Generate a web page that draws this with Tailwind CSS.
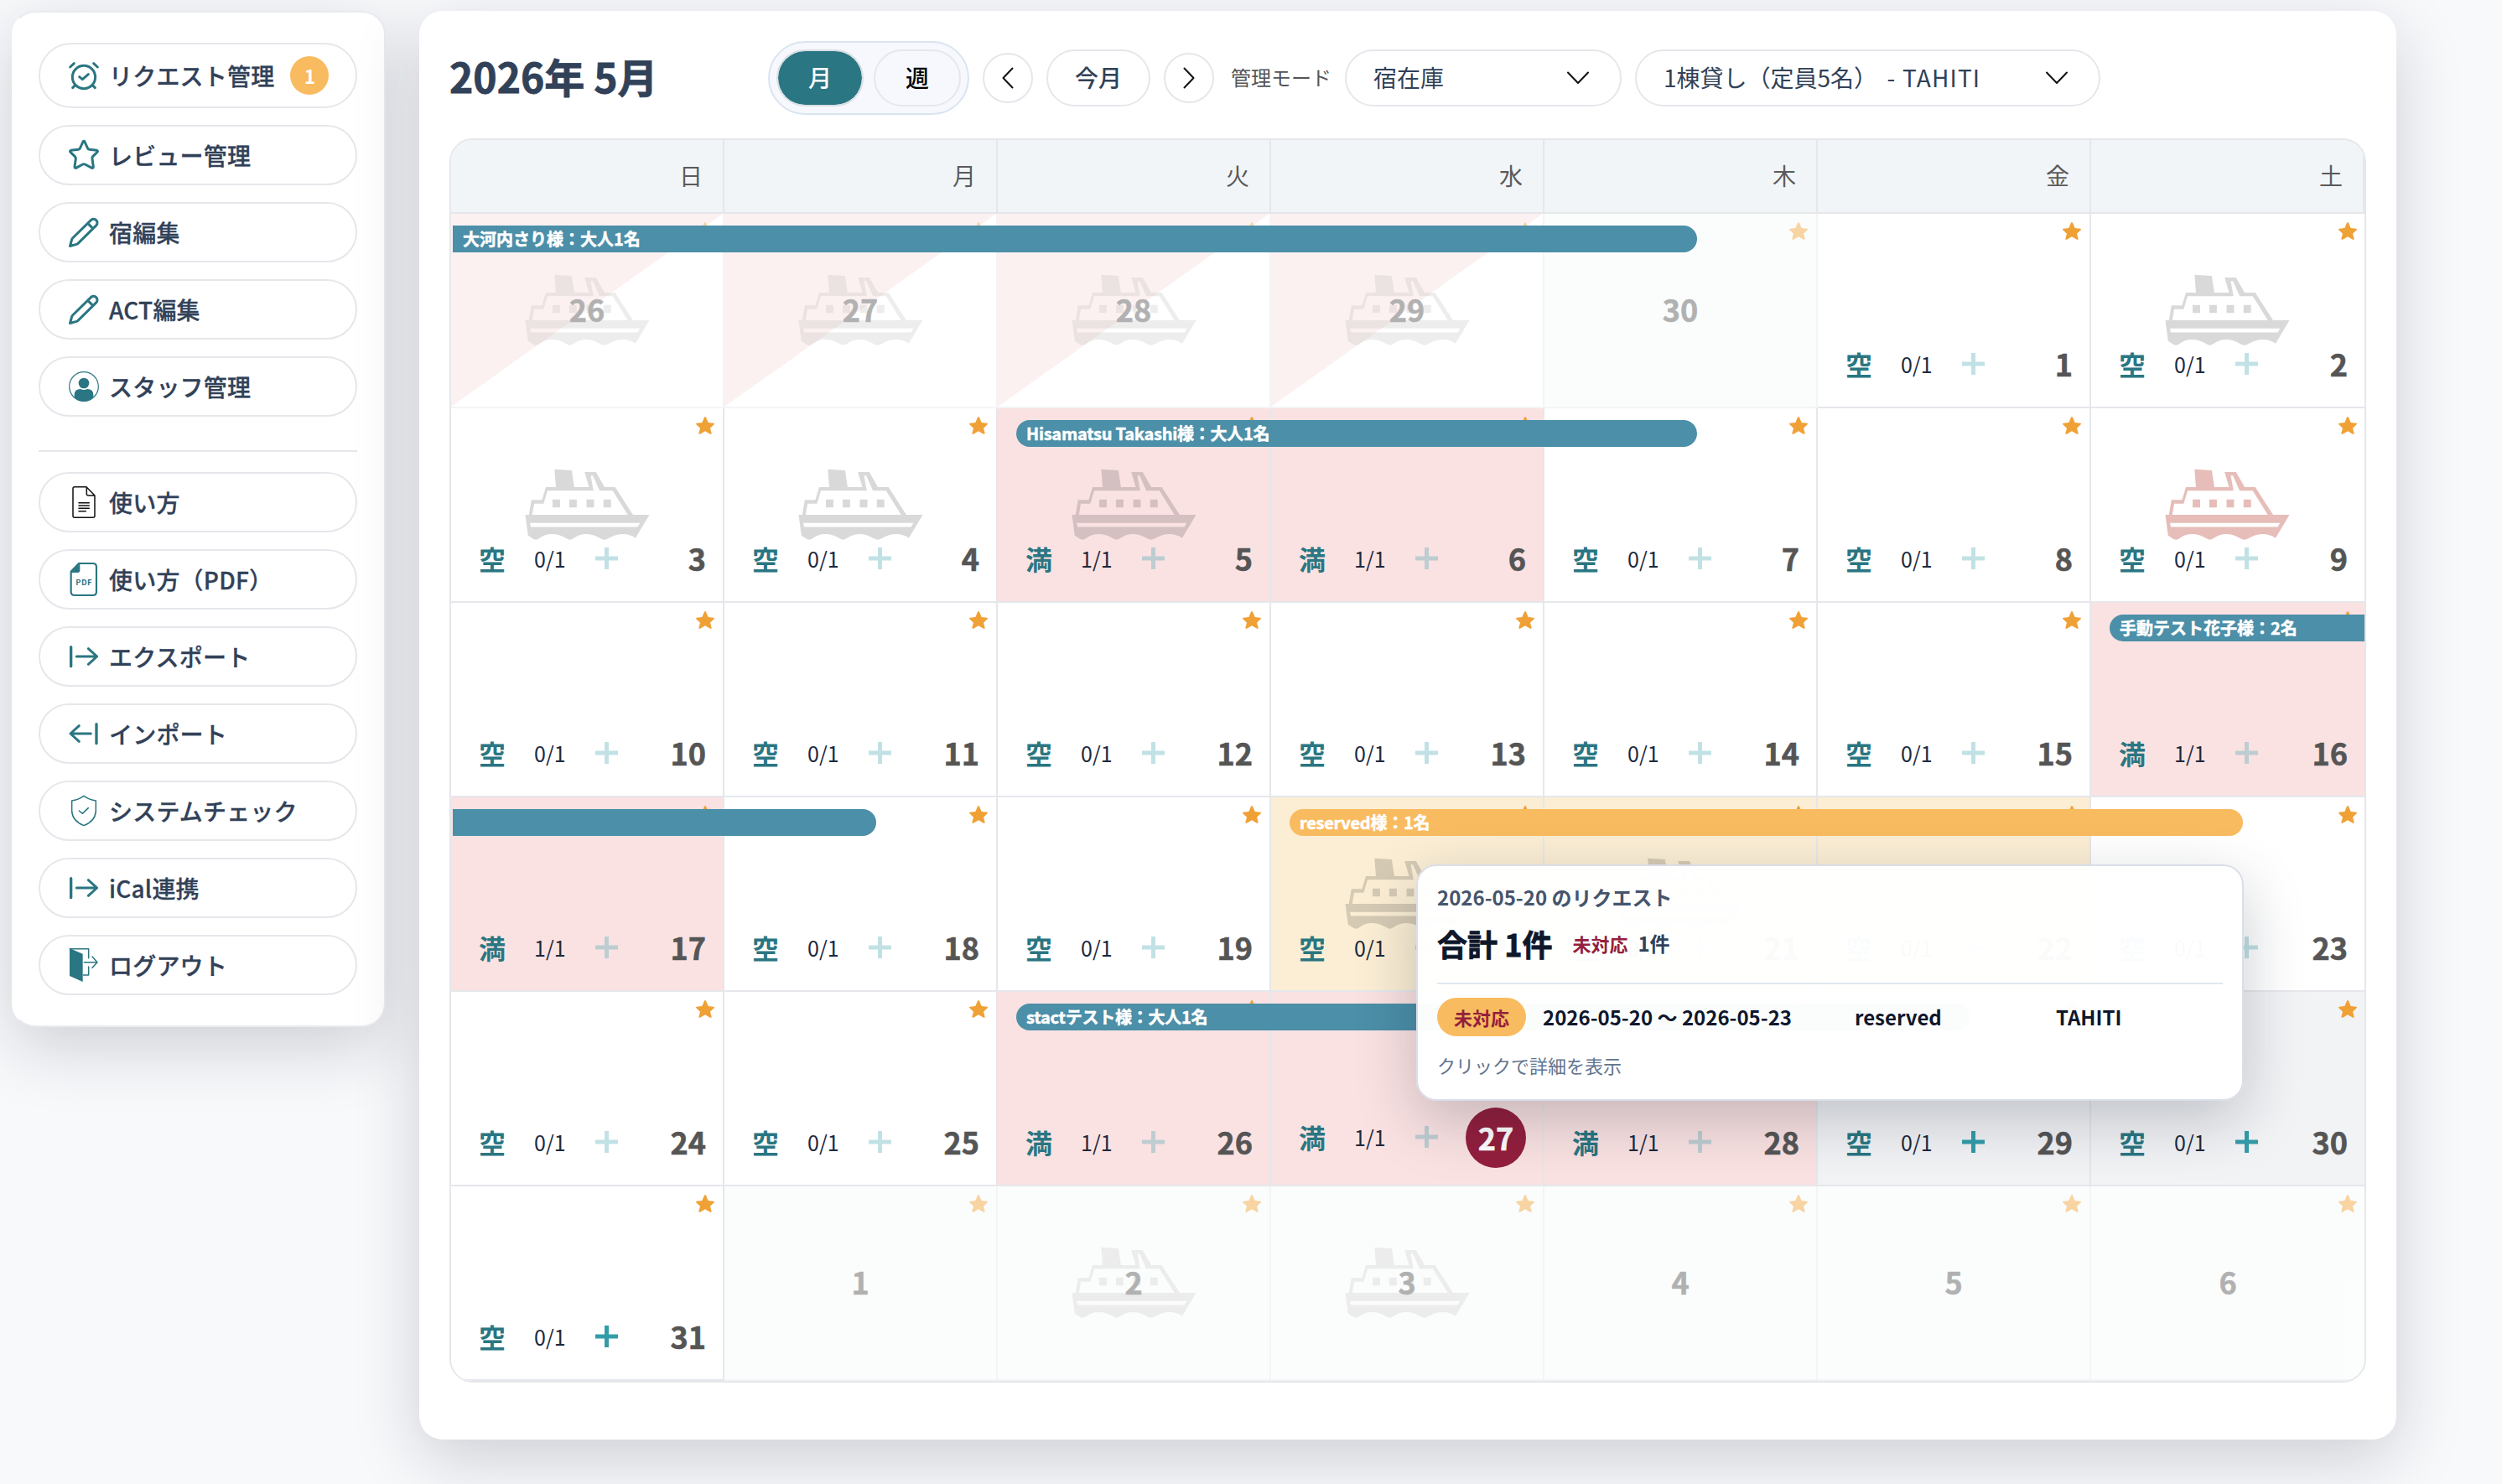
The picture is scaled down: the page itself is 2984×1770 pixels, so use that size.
<!DOCTYPE html>
<html lang="ja">
<head>
    <meta charset="UTF-8">
    <meta name="viewport" content="width=device-width, initial-scale=1.0">
    <title>予約カレンダー</title>
    <script src="https://cdn.jsdelivr.net/npm/@tailwindcss/browser@4"></script>
</head>
<body class="bg-[#f8f9fb] font-['Noto_Sans_CJK_JP',sans-serif] text-slate-700 w-[2984px] h-[1770px] overflow-hidden">
    <div class="flex items-start gap-10 pl-3.5 pt-[13px]">
        <!-- Sidebar -->
        <aside class="w-[446px] shrink-0 bg-white border-2 border-l-white border-gray-200/80 rounded-[28px] pl-[30px] pr-8 pt-9 pb-9 shadow-[0_24px_80px_rgba(15,23,42,0.18)]">
            <nav id="mainMenu" class="flex flex-col gap-5"></nav>
            <div class="h-0.5 bg-gray-200 mt-10 mb-6"></div>
            <nav id="subMenu" class="flex flex-col gap-5"></nav>
        </aside>

        <!-- Calendar -->
        <main class="relative w-[2358px] h-[1704px] bg-white rounded-[28px] px-9 pt-9 shadow-[0_24px_80px_rgba(15,23,42,0.18)]">
            <header class="flex items-center gap-4 h-[88px]">
                <h1 class="w-[364px] pb-1.5 text-5xl font-bold whitespace-nowrap [-webkit-text-stroke:0.8px]">2026年 5月</h1>
                <div class="flex items-center gap-3 h-[88px] px-2 bg-[#f6f8fd] border-2 border-[#dae4f0] rounded-full text-[28px] font-medium">
                    <button class="w-[104px] h-[68px] pb-0.5 rounded-full bg-[#2a7682] border-2 border-[#d9dfe4] bg-clip-padding text-white">月</button>
                    <button class="w-[104px] h-[68px] pb-0.5 rounded-full border-2 border-gray-200 text-black">週</button>
                </div>
                <button class="w-[60px] h-[60px] rounded-full border-2 border-gray-200 flex items-center justify-center">
                    <svg class="w-[14px] h-[26px]" viewBox="0 0 14 26" fill="none" stroke="#111" stroke-width="2" stroke-linecap="round" stroke-linejoin="round"><path d="M12.500 1.500L1.500 13l11 11.500"/></svg>
                </button>
                <button class="w-[124px] h-[68px] pb-0.5 rounded-full border-2 border-gray-200 text-[28px] font-medium">今月</button>
                <button class="w-[60px] h-[60px] rounded-full border-2 border-gray-200 flex items-center justify-center">
                    <svg class="w-[14px] h-[26px]" viewBox="0 0 14 26" fill="none" stroke="#111" stroke-width="2" stroke-linecap="round" stroke-linejoin="round"><path d="M1.500 1.500L12.500 13l-11 11.500"/></svg>
                </button>
                <span class="w-[120px] ml-1 pb-0.5 text-2xl text-[#555] whitespace-nowrap">管理モード</span>
                <div class="w-[330px] h-[68px] rounded-full border-2 border-gray-200 pl-8 pr-9 flex items-center justify-between text-[28px]">
                    <span class="pb-0.5">宿在庫</span>
                    <svg class="w-[28px] h-[16px]" viewBox="0 0 28 16" fill="none" stroke="#111" stroke-width="2" stroke-linecap="round" stroke-linejoin="round"><path d="M2 1.500l12 12.500L26 1.500"/></svg>
                </div>
                <div class="w-[555px] h-[68px] rounded-full border-2 border-gray-200 pl-8 pr-9 flex items-center justify-between text-[28px]">
                    <span class="pb-0.5 whitespace-nowrap">1棟貸し（定員5名）<span class="ml-1 tracking-[1.2px]"> - TAHITI</span></span>
                    <svg class="w-[28px] h-[16px]" viewBox="0 0 28 16" fill="none" stroke="#111" stroke-width="2" stroke-linecap="round" stroke-linejoin="round"><path d="M2 1.500l12 12.500L26 1.500"/></svg>
                </div>
            </header>

            <div class="mt-7 border-2 border-gray-200 rounded-[28px] overflow-hidden">
                <div id="weekdays" class="grid grid-cols-7 bg-[#f1f5f8]"></div>
                <div id="days" class="grid grid-cols-7"></div>
            </div>

            <!-- Request popup -->
            <div class="absolute left-[1189px] top-[1018px] z-20 w-[987px] h-[282px] bg-white/98 border-2 border-[#d9dee8] rounded-3xl px-[23px] pt-[19px] shadow-[0_24px_72px_rgba(15,23,42,0.22)]">
                <p class="h-9 leading-9 text-2xl font-bold text-slate-600">2026-05-20 のリクエスト</p>
                <div class="flex items-center h-[54px] mt-2.5 font-bold">
                    <span class="text-4xl text-slate-900 [-webkit-text-stroke:0.8px]">合計 1件</span>
                    <span class="ml-6 text-[22px] text-[#931f3d]">未対応</span>
                    <span class="ml-3 text-2xl">1件</span>
                </div>
                <div class="h-0.5 mt-5 bg-slate-200"></div>
                <div class="mt-4 h-[46px] grid grid-cols-[106px_352px_220px_1fr] gap-x-5 items-center text-2xl font-bold text-slate-900">
                    <span class="h-[46px] leading-[46px] rounded-full bg-[#f9bb5f] text-center text-[22px] text-[#931f3d]">未対応</span>
                    <span class="whitespace-nowrap">2026-05-20 〜 2026-05-23</span>
                    <span>reserved</span>
                    <span>TAHITI</span>
                </div>
                <p class="mt-4 h-9 leading-9 text-[22px] text-slate-500">クリックで詳細を表示</p>
            </div>
        </main>
    </div>

    <script>
        const icons = {
            alarm: `<g stroke-width="9"><circle cx="54" cy="60" r="41"/><path d="M5 24L19 11M89 11l14 13M14 98l9-9M94 98l-9-9M38 59l11 9 21-18"/></g>`,
            star: `<path stroke-width="9" d="M51 6q3-4 6 0l10 22q2 5 7 6l26 3q6 2 2 6L86 59q-3 3-2 8l4 29q0 5-5 4L58 87q-4-2-8 0L26 100q-5 1-5-4l4-29q0-5-3-8L6 43q-4-4 2-6l26-3q5-1 7-6z"/>`,
            pencil: `<path stroke-width="9" d="M4.500 103.500L11 80q1-3 3-5L80 10a13.500 13.500 0 0 1 19 19L33 94q-2 2-5 3zM68 22l19 19"/>`,
            user: `<circle cx="54" cy="54" r="52" stroke-width="3.500"/><g fill="currentColor" stroke="none"><circle cx="54" cy="42" r="19"/><path d="M20 92v-8q0-21 22-21 12 6 24 0 22 0 22 21v8q-14 15-34 15T20 92z"/></g>`,
            doc: `<path stroke="#111" stroke-width="4.500" d="M63-1H21q-6 0-6 6v98q0 6 6 6h66q6 0 6-6V30zM64 0v24q0 6 6 6h23M36 56h37M36 66h37M36 76h37M36 86h25"/>`,
            pdf: `<path stroke-width="6.500" d="M36-3h50q13 0 13 13v88q0 13-13 13H21Q8 111 8 98V26z"/><path fill="currentColor" stroke="none" d="M40-4v26q0 8-8 8H7z"/><text x="54" y="74" text-anchor="middle" font-size="28" font-weight="700" letter-spacing="1" fill="currentColor" stroke="none">PDF</text>`,
            out: `<path stroke-width="10" d="M8 20v69"/><path stroke-width="9" d="M28 54h72M70 26l31 28-31 28"/>`,
            in: `<path stroke-width="10" d="M99 20v69"/><path stroke-width="9" d="M79 54H7M37 26L6 54l31 28"/>`,
            shield: `<path stroke-width="4.500" d="M54 1q20 14 43 17v38q-3 36-43 51Q14 92 11 56V18Q34 15 54 1zM37 54l12 10 21-20"/>`,
            logout: `<path fill="currentColor" stroke="none" d="M3-6l47 20v100L3 93z"/><path stroke-width="4.500" d="M4-4h67v33M71 60v30H52M55 44h46M84 24l18 20-18 20"/>`
        };

        const mainMenu = [
            ["alarm", "リクエスト管理", 1],
            ["star", "レビュー管理"],
            ["pencil", "宿編集"],
            ["pencil", "ACT編集"],
            ["user", "スタッフ管理"]
        ];
        const subMenu = [
            ["doc", "使い方"],
            ["pdf", "使い方（PDF）"],
            ["out", "エクスポート"],
            ["in", "インポート"],
            ["shield", "システムチェック"],
            ["out", "iCal連携"],
            ["logout", "ログアウト"]
        ];

        const menuItem = ([icon, label, count]) => `
            <a class="flex items-center ${count ? "h-[78px]" : "h-[72px]"} pl-[34px] border-2 border-gray-200 rounded-full text-[28px] font-medium whitespace-nowrap">
                <svg class="w-9 h-9 mr-3 overflow-visible text-[#2a7682]" viewBox="0 0 108 108" fill="none" stroke="currentColor" stroke-linecap="round" stroke-linejoin="round">${icons[icon]}</svg>
                <span class="pb-px tracking-[0.2px] [-webkit-text-stroke:0.3px]">${label}</span>
                ${count ? `<span class="ml-[19px] w-[46px] h-[46px] leading-[46px] rounded-full bg-[#f9bb5f] text-center text-[22px] font-bold text-white">${count}</span>` : ""}
            </a>`;
        document.getElementById("mainMenu").innerHTML = mainMenu.map(menuItem).join("");
        document.getElementById("subMenu").innerHTML = subMenu.map(menuItem).join("");

        document.getElementById("weekdays").innerHTML = [..."日月火水木金土"].map(d => `
            <div class="h-[88px] flex items-center justify-end pr-6 pb-[3px] border-r-2 border-b-2 border-gray-200 text-[28px] text-[#5a5a5a]">${d}</div>`).join("");

        // every date is an index counted from 4/26
        const ships = [0, 1, 2, 3, 6, 7, 8, 9, 13, 24, 25, 37, 38];
        const full = [9, 10, 20, 21, 30, 31, 32];
        const requested = [24, 25, 26];
        const open = [33, 34, 35];
        const today = 31;

        // left and width are pixels from the first cell of the bar
        const bars = {
            0: { text: "大河内さり様：大人1名", left: 2, width: 1484, look: "bg-[#4c8fa8] rounded-r-2xl" },
            9: { text: "Hisamatsu Takashi様：大人1名", left: 22, width: 812, look: "bg-[#4c8fa8] rounded-2xl tracking-[-0.25px]" },
            20: { text: "手動テスト花子様：2名", left: 22, width: 304, look: "bg-[#4c8fa8] rounded-l-2xl" },
            21: { text: "", left: 2, width: 505, look: "bg-[#4c8fa8] rounded-r-2xl" },
            24: { text: "reserved様：1名", left: 22, width: 1137, look: "bg-[#f9bb5f] rounded-2xl tracking-[-0.25px]" },
            30: { text: "stactテスト様：大人1名", left: 22, width: 1137, look: "bg-[#4c8fa8] rounded-2xl tracking-[-0.25px]" }
        };

        const starIcon = last => `<svg class="absolute ${last ? "right-[9px]" : "right-2.5"} top-[10px] w-[22px] h-[21px]" viewBox="0 0 66 63" fill="#f0a136"><path d="M30 2q3-4 6 0l8 19 19 2q5 1 2 5L51 41l5 18q0 5-5 3L33 52 15 62q-5 2-5-3l5-18L1 28q-3-4 2-5l19-2z"/></svg>`;

        const shipIcon = color => `<svg class="absolute left-[88px] top-[72px] w-[149px] h-[85px] ${color}" viewBox="66 200 448 256" fill="currentColor">
            <path d="M172 202l62 4 9 60h53l-16-54h41l31 54h38l64 100h59l-50 83q-22-14-44-14-28 0-54 16-14 8-28 0-26-16-52-16-24 0-46 16-12 8-24 0-26-16-52-16-26 0-46 16-12 8-24 0l-16-11-10-74h13l9-54h38l14-46h36zM147 279l-14 47h-34l-7 40h343l-54-87h-47l-24-54h-8l10 54zM84 395l3 14h384l8-14z" fill-rule="evenodd"/>
            <path d="M165 311h27v28h-27zM225 311h27v28h-27zM287 311h27v28h-27zM348 311h27v28h-27z"/>
        </svg>`;

        const dayCell = i => {
            const faded = i < 5 || i > 35;
            const day = i < 5 ? 26 + i : i > 35 ? i - 35 : i - 4;
            let bg = "bg-white";
            if (i < 4) bg = "bg-[linear-gradient(to_bottom_right,#fae2e2_50%,#ffffff_50%)]";
            else if (faded) bg = "bg-[#f8fcfa]";
            else if (full.includes(i)) bg = "bg-[#fae2e2]";
            else if (requested.includes(i)) bg = "bg-[#fbeed4]";
            else if (i === 33 || i === 34) bg = "bg-[#f2f3f5]";

            const status = faded ? `<div class="relative h-full flex items-center justify-center pb-1 text-4xl font-bold text-[#555] [-webkit-text-stroke:0.6px]">${day}</div>` : `
                <div class="absolute inset-x-0 bottom-5 min-h-[60px] flex items-center pl-[33px] pr-5 ${i === today ? "h-[72px]" : ""}">
                    <span class="pb-[3px] text-[32px] font-bold text-[#2a7682]">${full.includes(i) ? "満" : "空"}</span>
                    <span class="w-[39px] ml-[34px] pb-px text-[25px] text-slate-800">${full.includes(i) ? "1/1" : "0/1"}</span>
                    <svg class="w-[27px] h-[26px] ml-[34px] mb-0.5 ${open.includes(i) ? "text-[#339ca9]" : "text-[#339ca9]/30"}" viewBox="0 0 27 26" fill="none" stroke="currentColor" stroke-width="5"><path d="M13.500 0v26M0 13h11M16 13h11"/></svg>
                    <span class="ml-auto text-4xl font-bold [-webkit-text-stroke:0.6px] ${i === today ? "w-[72px] h-[72px] leading-[70px] rounded-full bg-[#931f3d] text-center text-white" : "pb-1 text-[#555]"}">${day}</span>
                </div>`;

            const bar = bars[i];
            return `
                <div class="relative h-[232px]">
                    <div class="relative h-full border-b-2 border-gray-200 ${i % 7 === 6 ? "" : "border-r-2"} ${bg} ${faded ? "opacity-45" : ""}">
                        ${starIcon(i % 7 === 6)}
                        ${ships.includes(i) ? shipIcon(i === 13 ? "text-[#e6bdb8]" : "text-black/15") : ""}
                        ${status}
                    </div>
                    ${bar ? `<div class="absolute z-10 top-3.5 h-8 leading-8 pl-3 text-xl font-bold text-white whitespace-nowrap [-webkit-text-stroke:0.5px] ${bar.look}" style="left:${bar.left}px;width:${bar.width}px">${bar.text}</div>` : ""}
                </div>`;
        };
        document.getElementById("days").innerHTML = Array.from({ length: 42 }, (_, i) => dayCell(i)).join("");
    </script>
</body>
</html>
